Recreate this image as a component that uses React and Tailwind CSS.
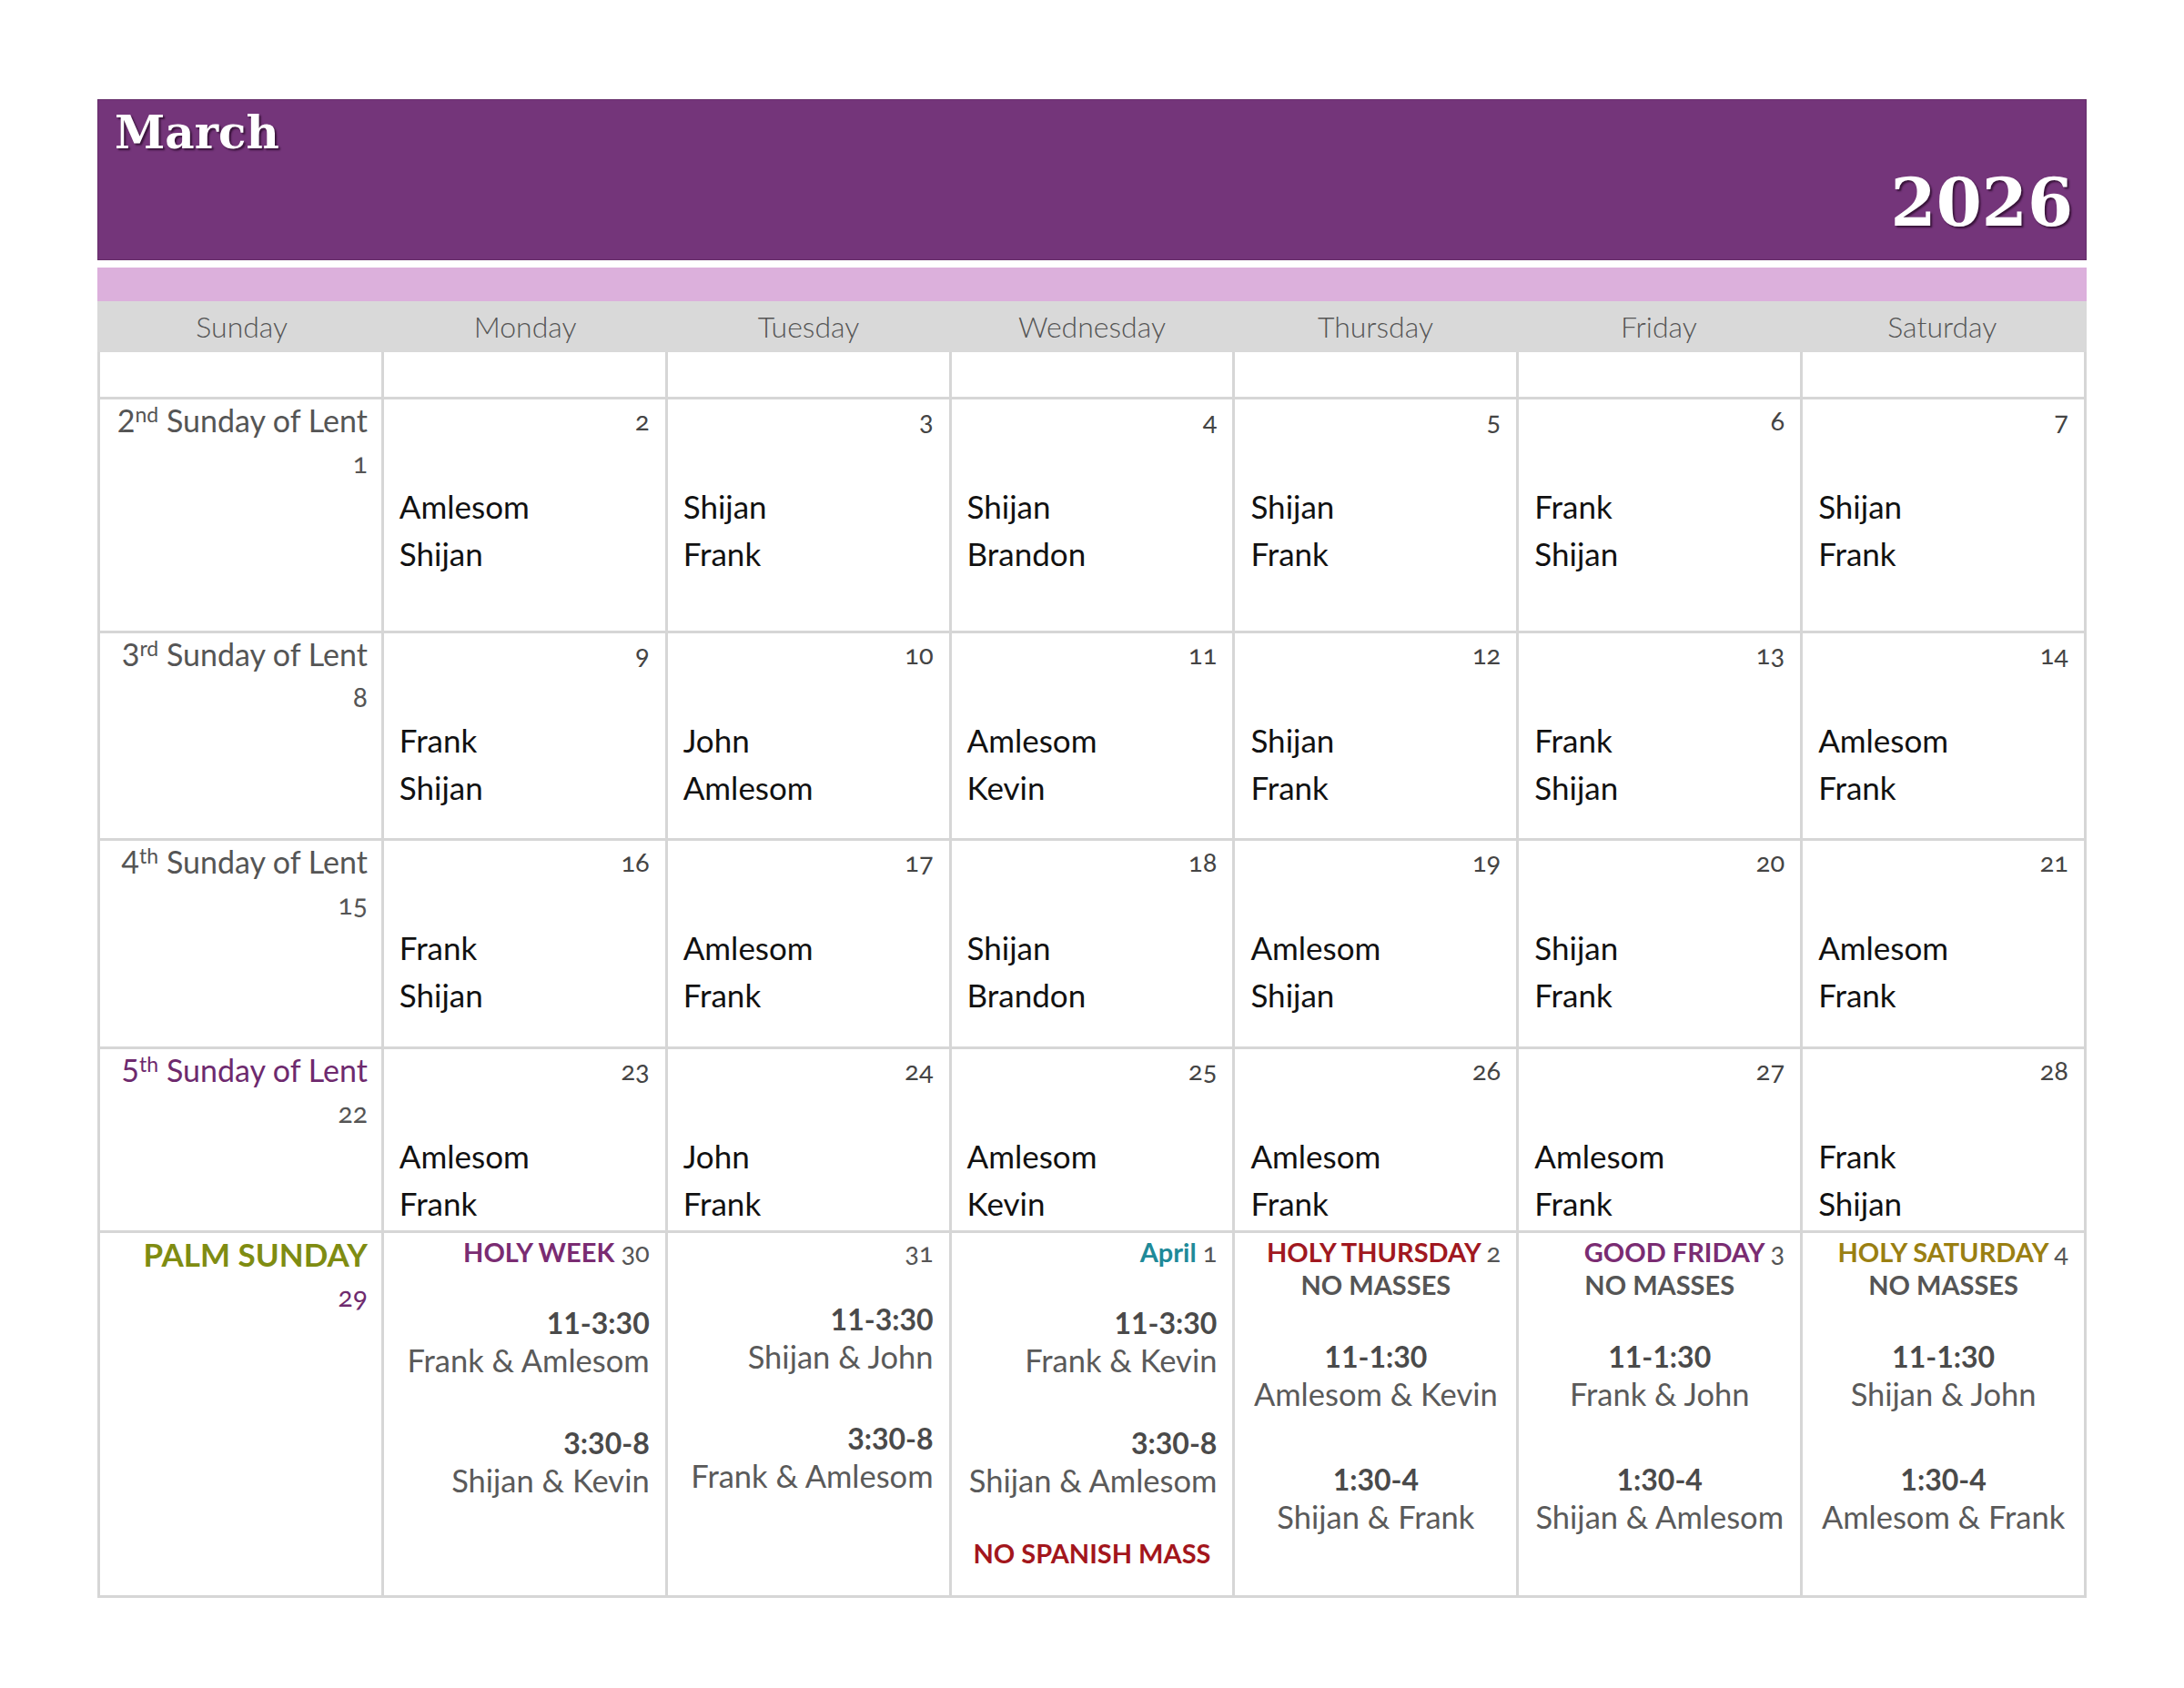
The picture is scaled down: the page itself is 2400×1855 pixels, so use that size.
import React from "react";

const FONT = { fontFamily: "Lato, 'Open Sans', 'Noto Sans', sans-serif" };

const weeks = [
  {
    ord: "2",
    sup: "nd",
    n: 1,
    purple: false,
    days: [
      [2, "Amlesom", "Shijan"],
      [3, "Shijan", "Frank"],
      [4, "Shijan", "Brandon"],
      [5, "Shijan", "Frank"],
      [6, "Frank", "Shijan"],
      [7, "Shijan", "Frank"],
    ],
  },
  {
    ord: "3",
    sup: "rd",
    n: 8,
    purple: false,
    days: [
      [9, "Frank", "Shijan"],
      [10, "John", "Amlesom"],
      [11, "Amlesom", "Kevin"],
      [12, "Shijan", "Frank"],
      [13, "Frank", "Shijan"],
      [14, "Amlesom", "Frank"],
    ],
  },
  {
    ord: "4",
    sup: "th",
    n: 15,
    purple: false,
    days: [
      [16, "Frank", "Shijan"],
      [17, "Amlesom", "Frank"],
      [18, "Shijan", "Brandon"],
      [19, "Amlesom", "Shijan"],
      [20, "Shijan", "Frank"],
      [21, "Amlesom", "Frank"],
    ],
  },
  {
    ord: "5",
    sup: "th",
    n: 22,
    purple: true,
    days: [
      [23, "Amlesom", "Frank"],
      [24, "John", "Frank"],
      [25, "Amlesom", "Kevin"],
      [26, "Amlesom", "Frank"],
      [27, "Amlesom", "Frank"],
      [28, "Frank", "Shijan"],
    ],
  },
];

const dayNames = ["Sunday", "Monday", "Tuesday", "Wednesday", "Thursday", "Friday", "Saturday"];

function SundayCell({ ord, sup, n, purple }) {
  return (
    <div className="bg-white pr-[15px] text-right text-[34px] text-[#555]">
      <div className={"leading-[46px] " + (purple ? "text-[#6e2a6e]" : "text-[#555]")}>
        {ord}
        <sup className="text-[23px]">{sup}</sup> Sunday of Lent
      </div>
      <div className="text-[30px] leading-[46px] oldstyle-nums">{n}</div>
    </div>
  );
}

function DayCell({ d }) {
  const [num, a, b] = d;
  return (
    <div className="bg-white pt-[3px]">
      <div className="pr-[17px] text-right text-[29px] leading-[40px] text-[#444] oldstyle-nums">{num}</div>
      <div className="mt-[48px] pl-[17px] text-[35px] leading-[52px] text-[#111]">
        <div>{a}</div>
        <div>{b}</div>
      </div>
    </div>
  );
}

function Slot({ time, names }) {
  return (
    <div>
      <div className="text-[32px] font-bold leading-[40px] text-[#4a4a4a]">{time}</div>
      <div className="text-[34.5px] leading-[42px] text-[#5a5a5a]">{names}</div>
    </div>
  );
}

function HolyHeader({ label, color, num }) {
  return (
    <div className="text-[29px] leading-[36px] text-right">
      {label && <span className={"font-bold " + color}>{label} </span>}
      <span className="text-[#555] oldstyle-nums">{num}</span>
    </div>
  );
}

export default function App() {
  return (
    <div className="min-h-[1855px] w-[2400px] bg-white" style={FONT}>
      <div className="ml-[107px] w-[2186px] pt-[109px]">
        {/* Header */}
        <div className="relative h-[177px] border border-[#652d69] bg-[#74357a]">
          <div
            className="absolute left-[18px] top-[4px] text-[50px] font-bold leading-[64px] text-white [text-shadow:2px_2px_2px_rgba(40,10,40,0.8)]"
            style={{ fontFamily: "'DejaVu Serif', 'Liberation Serif', serif" }}
          >
            March
          </div>
          <div
            className="absolute bottom-[24px] right-[14px] text-[72px] font-bold leading-[76px] text-white [text-shadow:2px_2px_2px_rgba(40,10,40,0.8)]"
            style={{ fontFamily: "'DejaVu Serif', 'Liberation Serif', serif" }}
          >
            2026
          </div>
        </div>

        <div className="mt-[8px] h-[37px] bg-[#dcb0dc]" />

        <div className="grid h-[56px] grid-cols-7 items-center bg-[#d9d9d9] px-[3px]">
          {dayNames.map((n) => (
            <div key={n} className="text-center text-[32px] font-light text-[#555]">
              {n}
            </div>
          ))}
        </div>

        {/* Calendar grid */}
        <div className="grid grid-cols-7 grid-rows-[49px_254px_225px_226px_199px_398px] gap-[3px] bg-[#d6d6d6] px-[3px] pb-[3px]">
          {Array.from({ length: 7 }).map((_, i) => (
            <div key={"e" + i} className="bg-white" />
          ))}

          {weeks.map((w, wi) => (
            <React.Fragment key={wi}>
              <SundayCell ord={w.ord} sup={w.sup} n={w.n} purple={w.purple} />
              {w.days.map((d) => (
                <DayCell key={d[0]} d={d} />
              ))}
            </React.Fragment>
          ))}

          {/* Holy Week row */}
          <div className="bg-white pr-[15px] text-right">
            <div className="text-[35px] font-bold leading-[46px] text-[#7f8c12]">PALM SUNDAY</div>
            <div className="text-[30px] leading-[46px] text-[#6e2a6e] oldstyle-nums">29</div>
          </div>

          <div className="bg-white pr-[17px] pt-[3px] text-right">
            <HolyHeader label="HOLY WEEK" color="text-[#7a2c72]" num="30" />
            <div className="mt-[40px]">
              <Slot time="11-3:30" names="Frank & Amlesom" />
            </div>
            <div className="mt-[50px]">
              <Slot time="3:30-8" names="Shijan & Kevin" />
            </div>
          </div>

          <div className="bg-white pr-[17px] pt-[3px] text-right">
            <HolyHeader label="" color="" num="31" />
            <div className="mt-[36px]">
              <Slot time="11-3:30" names="Shijan & John" />
            </div>
            <div className="mt-[49px]">
              <Slot time="3:30-8" names="Frank & Amlesom" />
            </div>
          </div>

          <div className="bg-white pt-[3px]">
            <div className="pr-[17px] text-right">
              <HolyHeader label="April" color="text-[#1f8a99]" num="1" />
              <div className="mt-[40px]">
                <Slot time="11-3:30" names="Frank & Kevin" />
              </div>
              <div className="mt-[50px]">
                <Slot time="3:30-8" names="Shijan & Amlesom" />
              </div>
            </div>
            <div className="mt-[41px] text-center text-[29px] font-bold leading-[36px] text-[#a3161c]">
              NO SPANISH MASS
            </div>
          </div>

          {[
            ["HOLY THURSDAY", "text-[#a01820]", "2", "Amlesom & Kevin", "Shijan & Frank"],
            ["GOOD FRIDAY", "text-[#7a2c72]", "3", "Frank & John", "Shijan & Amlesom"],
            ["HOLY SATURDAY", "text-[#9a7f12]", "4", "Shijan & John", "Amlesom & Frank"],
          ].map(([label, color, num, n1, n2]) => (
            <div key={num} className="bg-white pt-[3px]">
              <div className="pr-[17px]">
                <HolyHeader label={label} color={color} num={num} />
              </div>
              <div className="text-center text-[29px] font-bold leading-[36px] text-[#555]">NO MASSES</div>
              <div className="mt-[41px] text-center">
                <Slot time="11-1:30" names={n1} />
              </div>
              <div className="mt-[53px] text-center">
                <Slot time="1:30-4" names={n2} />
              </div>
            </div>
          ))}
        </div>
      </div>
    </div>
  );
}
